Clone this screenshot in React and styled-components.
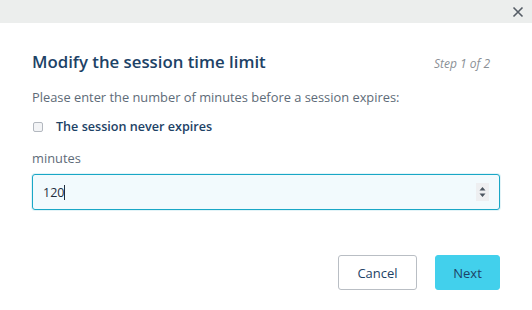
import React from "react";
import styled, { createGlobalStyle } from "styled-components";

const Global = createGlobalStyle`
  html, body { margin: 0; padding: 0; background: #fff; }
  body { font-family: "Open Sans", "Noto Sans", sans-serif; }
  * { box-sizing: border-box; }
`;

const Dialog = styled.div`
  width: 532px;
  height: 310px;
  background: #fff;
  display: flex;
  flex-direction: column;
`;

const TopBar = styled.div`
  height: 23px;
  background: #eceeed;
  display: flex;
  justify-content: flex-end;
  align-items: center;
  padding-right: 8px;
`;

const CloseButton = styled.button`
  border: 0;
  background: transparent;
  padding: 0;
  width: 12px;
  height: 12px;
  display: flex;
  cursor: pointer;
`;

const Body = styled.div`
  padding: 27px 32px 0 32px;
  display: flex;
  flex-direction: column;
`;

const Header = styled.div`
  display: flex;
  justify-content: space-between;
  align-items: baseline;
  padding-right: 10px;
`;

const Title = styled.h1`
  margin: 0;
  font-size: 16.8px;
  font-weight: 600;
  color: #1d4266;
  line-height: 24px;
`;

const Step = styled.span`
  font-size: 12px;
  font-style: italic;
  color: #8a8f95;
`;

const Text = styled.p`
  margin: 14px 0 0 0;
  font-size: 12.85px;
  color: #5e6b78;
  line-height: 18px;
`;

const CheckRow = styled.label`
  display: flex;
  align-items: center;
  gap: 13px;
  margin-top: 12px;
  line-height: 18px;
`;

const Box = styled.span`
  width: 10px;
  height: 10px;
  margin-left: 1px;
  border: 1px solid #b3b8bf;
  border-radius: 2px;
  background: #f3f4f6;
`;

const CheckLabel = styled.span`
  font-size: 12.6px;
  font-weight: 600;
  color: #1d4266;
`;

const FieldLabel = styled.div`
  margin-top: 13px;
  font-size: 12.85px;
  color: #5e6b78;
  line-height: 18px;
`;

const Field = styled.div`
  margin-top: 7px;
  height: 36px;
  border: 1px solid #19a7c6;
  border-radius: 3px;
  background: #f2fafd;
  display: flex;
  align-items: center;
  padding: 0 10px 0 10px;
  box-shadow: 0 0 0 1px rgba(25, 167, 198, 0.12);
`;

const Value = styled.span`
  font-size: 12.5px;
  color: #1f2d3d;
  flex: 1;
  display: flex;
  align-items: center;
`;

const Caret = styled.span`
  width: 1px;
  height: 15px;
  background: #1f2d3d;
`;

const Spinner = styled.span`
  width: 13px;
  height: 18px;
  background: #eeeff1;
  display: flex;
  align-items: center;
  justify-content: center;
`;

const Footer = styled.div`
  display: flex;
  justify-content: flex-end;
  gap: 18px;
  padding: 45px 32px 0 0;
`;

const Button = styled.button`
  height: 35px;
  border-radius: 3px;
  font-family: inherit;
  font-size: 13px;
  padding: 0;
  width: ${(p) => p.$w}px;
  color: #1d4266;
  border: 1px solid ${(p) => (p.$primary ? "#42d0ec" : "#b9bec4")};
  background: ${(p) => (p.$primary ? "#42d0ec" : "#fff")};
`;

export default function App() {
  return (
    <>
      <Global />
      <Dialog>
        <TopBar>
          <CloseButton aria-label="close">
            <svg width="12" height="12" viewBox="0 0 12 12">
              <path d="M1.5 1.5 L10.5 10.5 M10.5 1.5 L1.5 10.5" stroke="#555d66" strokeWidth="1.6" />
            </svg>
          </CloseButton>
        </TopBar>
        <Body>
          <Header>
            <Title>Modify the session time limit</Title>
            <Step>Step 1 of 2</Step>
          </Header>
          <Text>Please enter the number of minutes before a session expires:</Text>
          <CheckRow>
            <Box />
            <CheckLabel>The session never expires</CheckLabel>
          </CheckRow>
          <FieldLabel>minutes</FieldLabel>
          <Field>
            <Value>
              120
              <Caret />
            </Value>
            <Spinner>
              <svg width="7" height="12" viewBox="0 0 7 12">
                <path d="M3.5 1 L6.5 4.5 L0.5 4.5 Z M3.5 11 L6.5 7.5 L0.5 7.5 Z" fill="#4b5560" />
              </svg>
            </Spinner>
          </Field>
        </Body>
        <Footer>
          <Button $w={79}>Cancel</Button>
          <Button $w={65} $primary>Next</Button>
        </Footer>
      </Dialog>
    </>
  );
}
